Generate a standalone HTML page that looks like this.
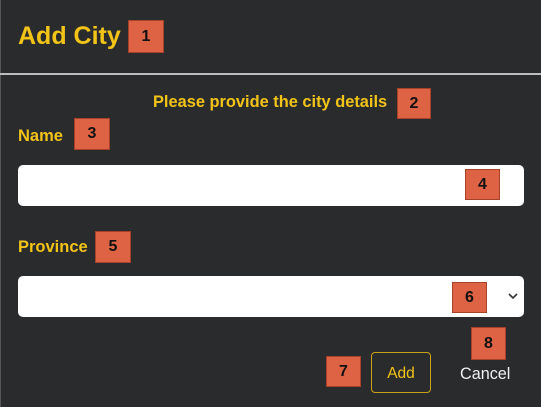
<!DOCTYPE html>
<html><head><style>
html,body{margin:0;padding:0;}
body{width:541px;height:407px;background:#2a2b2d;position:relative;overflow:hidden;font-family:"Liberation Sans",sans-serif;}
.a{position:absolute;}
.y{color:#f2c418;font-weight:bold;}
.b{position:absolute;background:#dd6344;border:1px solid #a8412a;color:#111;font-weight:bold;font-size:16px;text-align:center;box-sizing:border-box;}
.in{position:absolute;background:#fff;border-radius:5px;left:18px;width:506px;height:41px;}
</style></head><body>
<div class="a" style="left:0;top:0;width:1px;height:407px;background:#555;"></div>
<div class="a y" style="left:18px;top:22px;font-size:25px;font-weight:bold;">Add City</div>
<div class="b" style="left:128px;top:20px;width:36px;height:33px;line-height:31px;">1</div>
<div class="a" style="left:0;top:73px;width:541px;height:2px;background:#bdbdbd;"></div>
<div class="a y" style="left:153px;top:93px;font-size:16.4px;">Please provide the city details</div>
<div class="b" style="left:397px;top:88px;width:34px;height:31px;line-height:29px;">2</div>
<div class="a y" style="left:18px;top:127px;font-size:16.5px;">Name</div>
<div class="b" style="left:74px;top:118px;width:36px;height:32px;line-height:30px;">3</div>
<div class="in" style="top:165px;"></div>
<div class="b" style="left:465px;top:169px;width:35px;height:31px;line-height:29px;">4</div>
<div class="a y" style="left:18px;top:238px;font-size:16.5px;">Province</div>
<div class="b" style="left:95px;top:231px;width:36px;height:32px;line-height:30px;">5</div>
<div class="in" style="top:276px;"></div>
<svg class="a" style="left:508px;top:292px" width="10" height="8"><path d="M1 2 L5 6 L9 2" stroke="#333" stroke-width="1.6" fill="none"/></svg>
<div class="b" style="left:452px;top:282px;width:35px;height:31px;line-height:29px;">6</div>
<div class="b" style="left:326px;top:356px;width:35px;height:31px;line-height:29px;">7</div>
<div class="a" style="left:371px;top:352px;width:60px;height:41px;border:1px solid #c9a315;border-radius:4px;box-sizing:border-box;color:#f2c418;font-size:15.5px;text-align:center;line-height:41px;">Add</div>
<div class="b" style="left:471px;top:327px;width:35px;height:33px;line-height:31px;">8</div>
<div class="a" style="left:460px;top:365px;color:#f0f0f0;font-size:16.2px;">Cancel</div>
</body></html>
